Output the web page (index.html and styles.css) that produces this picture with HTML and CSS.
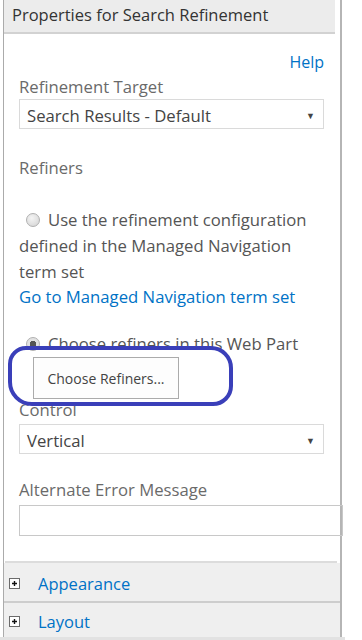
FILE: index.html
```html
<!DOCTYPE html>
<html lang="en">
<head>
    <meta charset="UTF-8">
    <meta name="viewport" content="width=device-width, initial-scale=1.0">
    <title>Properties for Search Refinement</title>
    <link rel="stylesheet" href="styles.css">
</head>
<body>
    <div class="panel">
        <div class="panel-title">Properties for Search Refinement</div>

        <div class="panel-body">
            <div class="help-row"><a class="link" href="#">Help</a></div>

            <div class="field-label">Refinement Target</div>
            <div class="select">
                <span>Search Results - Default</span>
                <span class="arrow">&#9660;</span>
            </div>

            <div class="field-label section-label">Refiners</div>

            <div class="radio-text">
                <span class="radio"></span>Use the refinement configuration defined in the Managed Navigation term set
            </div>
            <a class="link nav-link" href="#">Go to Managed Navigation term set</a>

            <div class="radio-text second-radio">
                <span class="radio checked"></span>Choose refiners in this Web Part
            </div>
            <button class="choose-button">Choose Refiners...</button>

            <!-- hand drawn highlight over the button -->
            <div class="highlight"></div>

            <div class="field-label control-label">Control</div>
            <div class="select">
                <span>Vertical</span>
                <span class="arrow">&#9660;</span>
            </div>

            <div class="field-label error-label">Alternate Error Message</div>
            <div class="text-input"></div>
        </div>

        <div class="separator"></div>

        <div class="section-row">
            <span class="plus-box">
                <svg width="11" height="11" viewBox="0 0 11 11">
                    <rect x="0.5" y="0.5" width="10" height="10" fill="#fff" stroke="#6b6b6b"/>
                    <path d="M3 5.5h5M5.5 3v5" stroke="#111" stroke-width="1.4"/>
                </svg>
            </span>
            <a class="link section-link" href="#">Appearance</a>
        </div>
        <div class="section-row last-row">
            <span class="plus-box">
                <svg width="11" height="11" viewBox="0 0 11 11">
                    <rect x="0.5" y="0.5" width="10" height="10" fill="#fff" stroke="#6b6b6b"/>
                    <path d="M3 5.5h5M5.5 3v5" stroke="#111" stroke-width="1.4"/>
                </svg>
            </span>
            <a class="link section-link" href="#">Layout</a>
        </div>
    </div>
    <div class="bottom-bar"></div>
</body>
</html>
```

FILE: styles.css
```css
/* General Styles */
body {
    font-family: "Open Sans", "Noto Sans", Arial, sans-serif;
    background-color: #ffffff;
    margin: 0;
    padding: 0;
    color: #666666;
}

/* Panel frame */
.panel {
    margin-left: 3px;
    width: 336px;
    border-left: 1px solid #ababab;
    border-right: 2px solid #b5b5b5;
}

.panel-title {
    background-color: #ececec;
    height: 32px;
    line-height: 30px;
    padding-left: 8px;
    margin-right: 5px;
    font-size: 16.5px;
    color: #333333;
    border-bottom: 2px solid #d2d2d2;
}

.panel-body {
    position: relative;
    padding: 14px 0 0 15px;
}

/* Links */
.link {
    color: #0072c6;
    text-decoration: none;
}

.help-row {
    text-align: right;
    padding-right: 16px;
    font-size: 16px;
    line-height: 28px;
}

/* Labels */
.field-label {
    font-size: 16.7px;
    line-height: 22px;
    color: #6a6a6a;
}

.section-label {
    margin-top: 28px;
}

.control-label {
    margin-top: 2px;
    line-height: 18px;
    margin-bottom: 5px;
}

.error-label {
    margin-top: 25px;
    margin-bottom: 4px;
}

/* Select boxes */
.select {
    display: flex;
    justify-content: space-between;
    align-items: center;
    height: 26px;
    margin-top: 1px;
    border: 1px solid #dadada;
    padding-left: 7px;
    padding-top: 2px;
    width: 296px;
    font-size: 16.7px;
    color: #444444;
    box-sizing: content-box;
}

.select .arrow {
    font-size: 9px;
    color: #444444;
    margin-right: 8px;
}

/* Radio options */
.radio-text {
    font-size: 16.7px;
    line-height: 26px;
    color: #555555;
    margin-top: 28px;
    padding-right: 20px;
}

.radio {
    display: inline-block;
    width: 12px;
    height: 12px;
    border: 1px solid #b0b0b0;
    border-radius: 50%;
    background: radial-gradient(circle at 40% 35%, #f4f4f4, #d2d2d2);
    margin-left: 7px;
    margin-right: 8px;
    vertical-align: -1px;
}

.radio.checked {
    background: radial-gradient(circle, #555555 0 3px, #e2e2e2 3.5px);
}

.nav-link {
    display: block;
    font-size: 16.7px;
    line-height: 24px;
}

.second-radio {
    margin-top: 22px;
}

/* Button */
.choose-button {
    display: block;
    margin: 0 0 0 14px;
    width: 146px;
    height: 42px;
    background-color: #fdfdfd;
    border: 1px solid #ababab;
    font-family: "Open Sans", "Noto Sans", Arial, sans-serif;
    font-size: 14px;
    color: #444444;
}

/* Highlight annotation drawn over the button */
.highlight {
    position: absolute;
    left: 4px;
    top: 312px;
    width: 217px;
    height: 52px;
    border: 4px solid #3a3fb9;
    border-radius: 18px 22px 20px 24px;
}

/* Text input */
.text-input {
    height: 29px;
    border: 1px solid #c8c8c8;
    margin-right: -3px;
}

.separator {
    margin: 25px 3px 0 1px;
    height: 2px;
    background-color: #dcdcdc;
}

/* Collapsible sections */
.section-row {
    display: flex;
    align-items: center;
    height: 40px;
    padding-top: 3px;
    box-sizing: border-box;
    background-color: #efefef;
    border-bottom: 2px solid #cdcdcd;
}

.last-row {
    height: 34px;
    border-bottom: none;
}

.plus-box {
    display: flex;
    margin-left: 5px;
    margin-right: 18px;
}

.section-link {
    font-size: 16.5px;
}

.bottom-bar {
    width: 345px;
    height: 4px;
    background-color: #e2e2e2;
}
```
